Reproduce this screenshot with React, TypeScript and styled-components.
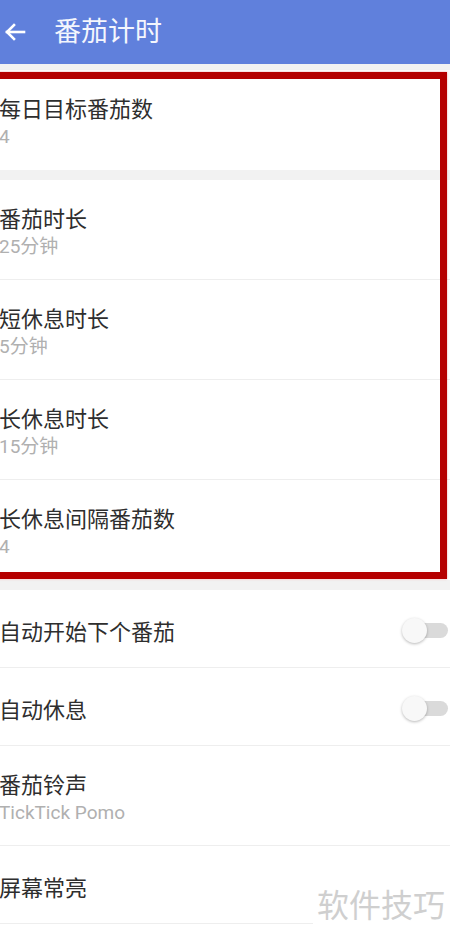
import React from "react";
import styled, { createGlobalStyle } from "styled-components";

const Global = createGlobalStyle`
  html, body { margin: 0; padding: 0; background: #ffffff; }
  body { font-family: "Noto Sans CJK SC", "Noto Sans", sans-serif; }
  * { box-sizing: border-box; }
`;

const Page = styled.div`
  width: 450px;
  height: 937px;
  overflow: hidden;
  position: relative;
  background: #ffffff;
`;

const Header = styled.header`
  height: 64px;
  background: #6080dc;
  display: flex;
  align-items: center;
  gap: 27px;
  padding-left: 3px;
  color: #ffffff;
`;

const Title = styled.h1`
  margin: 0;
  font-size: 27px;
  font-weight: 400;
  line-height: 1;
  color: #f4f6fd;
  padding-bottom: 6px;
`;

const Gap = styled.div<{ $h: number }>`
  height: ${(p) => p.$h}px;
  background: #f2f2f2;
`;

const Section = styled.section`
  position: relative;
`;

const Row = styled.div<{ $h: number; $divider?: boolean; $pt: number }>`
  height: ${(p) => p.$h}px;
  padding-top: ${(p) => p.$pt}px;
  display: flex;
  align-items: flex-start;
  justify-content: space-between;
  border-bottom: ${(p) => (p.$divider ? "1px solid #eeeeee" : "none")};
  background: #ffffff;
`;

const Texts = styled.div`
  display: flex;
  flex-direction: column;
  margin-left: -1px;
`;

const Label = styled.div`
  font-size: 22px;
  line-height: 28px;
  color: #2e2e2e;
`;

const Sub = styled.div`
  font-family: "Roboto", "Noto Sans CJK SC", sans-serif;
  font-size: 19px;
  line-height: 26px;
  margin-top: 3px;
  color: #b0b0b0;
`;

const Toggle = styled.div`
  position: relative;
  width: 46px;
  height: 28px;
  margin-right: 2px;
  display: flex;
  align-items: center;
`;

const Track = styled.div`
  width: 40px;
  height: 15px;
  margin-left: 6px;
  border-radius: 8px;
  background: #dadada;
`;

const Thumb = styled.div`
  position: absolute;
  left: 0;
  top: 2px;
  width: 25px;
  height: 25px;
  border-radius: 50%;
  background: #f8f8f8;
  box-shadow: 0 1px 3px rgba(0, 0, 0, 0.28);
`;

const RedFrame = styled.div`
  position: absolute;
  left: -12px;
  top: 2px;
  width: 459px;
  height: 507px;
  border: 7px solid #b50000;
  box-shadow: 0 0 2px rgba(220, 80, 80, 0.5);
  pointer-events: none;
`;

const Watermark = styled.div`
  position: absolute;
  right: 0;
  bottom: 0;
  width: 137px;
  height: 60px;
  background: #ffffff;
  display: flex;
  align-items: flex-start;
  justify-content: flex-end;
  padding-top: 6px;
  padding-right: 5px;
  font-size: 32px;
  line-height: 1.3;
  color: #cfcfcf;
`;

const ArrowIcon = () => (
  <svg width="24" height="24" viewBox="0 0 24 24" fill="none" stroke="#ffffff" strokeWidth="2.6" strokeLinecap="square">
    <path d="M21 12H4" />
    <path d="M11 5l-7 7 7 7" />
  </svg>
);

type Item = { label: string; sub?: string; toggle?: boolean; divider?: boolean };

const Setting = ({ label, sub, toggle, divider }: Item) => {
  const twoLine = !!sub;
  return (
    <Row $h={twoLine ? 100 : 78} $pt={twoLine ? 23 : 26} $divider={divider}>
      <Texts>
        <Label>{label}</Label>
        {sub && <Sub>{sub}</Sub>}
      </Texts>
      {toggle && (
        <Toggle>
          <Track />
          <Thumb />
        </Toggle>
      )}
    </Row>
  );
};

export default function App() {
  return (
    <>
      <Global />
      <Page>
        <Header>
          <ArrowIcon />
          <Title>番茄计时</Title>
        </Header>
        <Gap $h={6} />
        <Section>
          <Setting label="每日目标番茄数" sub="4" />
          <Gap $h={10} />
          <Setting label="番茄时长" sub="25分钟" divider />
          <Setting label="短休息时长" sub="5分钟" divider />
          <Setting label="长休息时长" sub="15分钟" divider />
          <Setting label="长休息间隔番茄数" sub="4" />
          <RedFrame />
        </Section>
        <Gap $h={10} />
        <Setting label="自动开始下个番茄" toggle divider />
        <Setting label="自动休息" toggle divider />
        <Setting label="番茄铃声" sub="TickTick Pomo" divider />
        <Setting label="屏幕常亮" divider />
        <Watermark>软件技巧</Watermark>
      </Page>
    </>
  );
}
